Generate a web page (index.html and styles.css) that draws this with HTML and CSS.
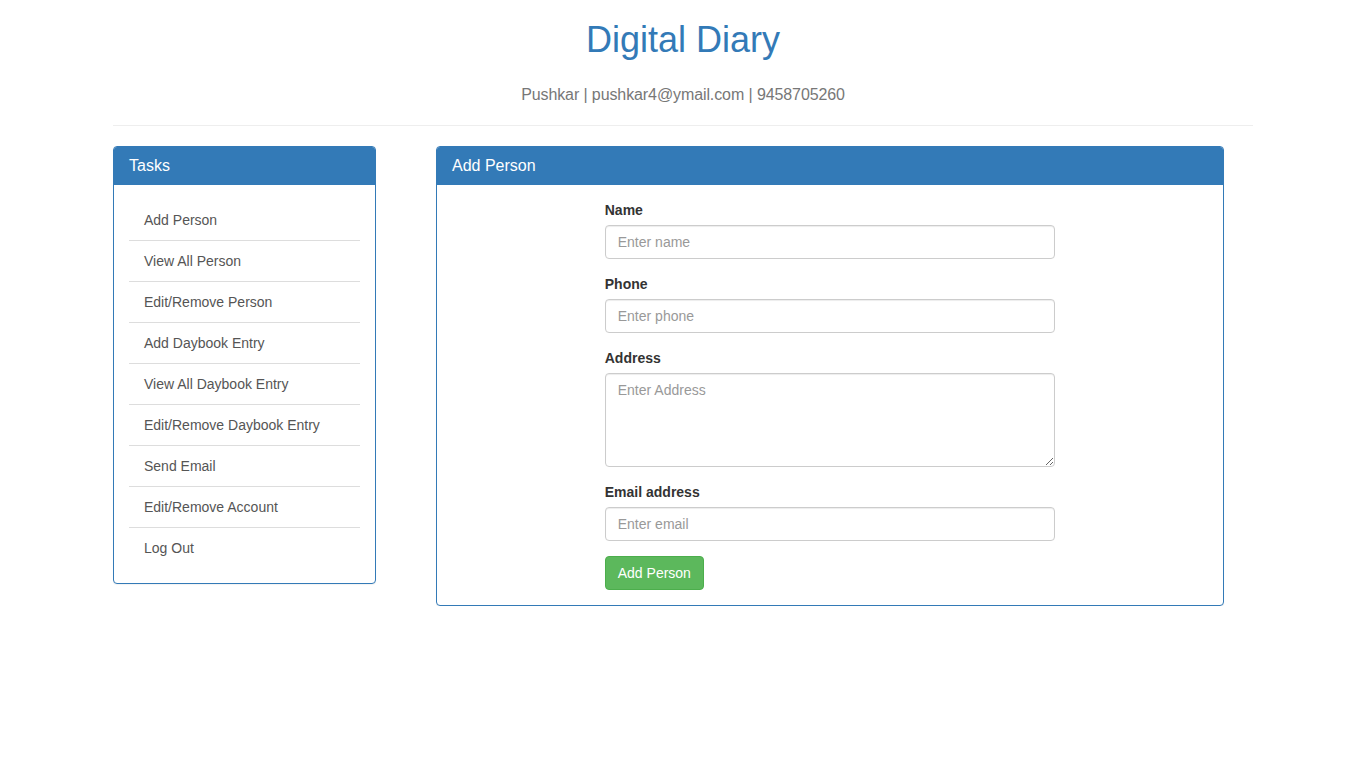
FILE: index.html
```html
<!DOCTYPE html>
<html lang="en">
<head>
<meta charset="utf-8">
<title>Digital Diary</title>
<link rel="stylesheet" href="styles.css">
</head>
<body>
<div class="container">
  <header class="site-header">
    <h1 class="site-title">Digital Diary</h1>
    <p class="site-sub">Pushkar | pushkar4@ymail.com | 9458705260</p>
  </header>
  <hr class="divider">
  <div class="layout">
    <aside class="panel panel-side">
      <div class="panel-heading">Tasks</div>
      <div class="panel-body">
        <ul class="task-list">
          <li><a href="#">Add Person</a></li>
          <li><a href="#">View All Person</a></li>
          <li><a href="#">Edit/Remove Person</a></li>
          <li><a href="#">Add Daybook Entry</a></li>
          <li><a href="#">View All Daybook Entry</a></li>
          <li><a href="#">Edit/Remove Daybook Entry</a></li>
          <li><a href="#">Send Email</a></li>
          <li><a href="#">Edit/Remove Account</a></li>
          <li><a href="#">Log Out</a></li>
        </ul>
      </div>
    </aside>
    <section class="panel panel-main">
      <div class="panel-heading">Add Person</div>
      <div class="panel-body">
        <form class="person-form">
          <div class="form-group">
            <label class="form-label" for="name">Name</label>
            <input class="form-control" id="name" type="text" placeholder="Enter name">
          </div>
          <div class="form-group">
            <label class="form-label" for="phone">Phone</label>
            <input class="form-control" id="phone" type="text" placeholder="Enter phone">
          </div>
          <div class="form-group">
            <label class="form-label" for="address">Address</label>
            <textarea class="form-control form-textarea" id="address" rows="4" placeholder="Enter Address"></textarea>
          </div>
          <div class="form-group">
            <label class="form-label" for="email">Email address</label>
            <input class="form-control" id="email" type="email" placeholder="Enter email">
          </div>
          <button class="btn-success" type="button">Add Person</button>
        </form>
      </div>
    </section>
  </div>
</div>
</body>
</html>
```

FILE: styles.css
```css
* { box-sizing: border-box; }
html, body { margin: 0; padding: 0; }
body {
  font-family: "Liberation Sans", Arial, sans-serif;
  font-size: 14px;
  line-height: 1.42857;
  color: #333;
  background: #fff;
}
.container {
  width: 1140px;
  margin: 0 auto;
}
.site-header { text-align: center; }
.site-title {
  margin: 20px 0 0;
  font-size: 36px;
  font-weight: 400;
  line-height: 1.1;
  color: #337ab7;
}
.site-sub {
  margin: 24px 0 0;
  font-size: 16px;
  line-height: 22px;
  letter-spacing: -0.1px;
  color: #777;
}
.divider {
  margin: 19px 0 20px;
  border: 0;
  border-top: 1px solid #eee;
  height: 0;
}
.layout {
  display: flex;
  align-items: flex-start;
  gap: 60.5px;
}
.panel {
  border: 1px solid #337ab7;
  border-radius: 4px;
  background: #fff;
  box-shadow: 0 1px 1px rgba(0,0,0,.05);
}
.panel-side { width: 262.5px; flex: none; }
.panel-main { width: 787.5px; flex: none; }
.panel-heading {
  background: #337ab7;
  color: #fff;
  padding: 10px 15px;
  font-size: 16px;
  line-height: 1.1;
  border-bottom: 1px solid #337ab7;
  border-radius: 3px 3px 0 0;
}
.panel-body { padding: 15px; }
.task-list {
  list-style: none;
  margin: 0;
  padding: 0;
}
.task-list li {
  border-top: 1px solid #ddd;
}
.task-list li:first-child { border-top: 0; }
.task-list a {
  display: block;
  padding: 10px 15px;
  line-height: 20px;
  color: #555;
  text-decoration: none;
}
.person-form {
  width: 450px;
  margin: 0 auto;
}
.form-group { margin-bottom: 15px; }
.form-label {
  display: block;
  margin-bottom: 5px;
  font-weight: 700;
  line-height: 20px;
}
.form-control {
  display: block;
  width: 100%;
  height: 34px;
  padding: 6px 12px;
  font-family: inherit;
  font-size: 14px;
  line-height: 20px;
  color: #555;
  background: #fff;
  border: 1px solid #ccc;
  border-radius: 4px;
  box-shadow: inset 0 1px 1px rgba(0,0,0,.075);
  margin: 0;
}
.form-control::placeholder { color: #999; opacity: 1; }
.form-textarea {
  height: 94px;
  resize: vertical;
}
.btn-success {
  display: inline-block;
  padding: 6px 12px;
  font-family: inherit;
  font-size: 14px;
  line-height: 20px;
  color: #fff;
  background: #5cb85c;
  border: 1px solid #4cae4c;
  border-radius: 4px;
  cursor: pointer;
}
```
